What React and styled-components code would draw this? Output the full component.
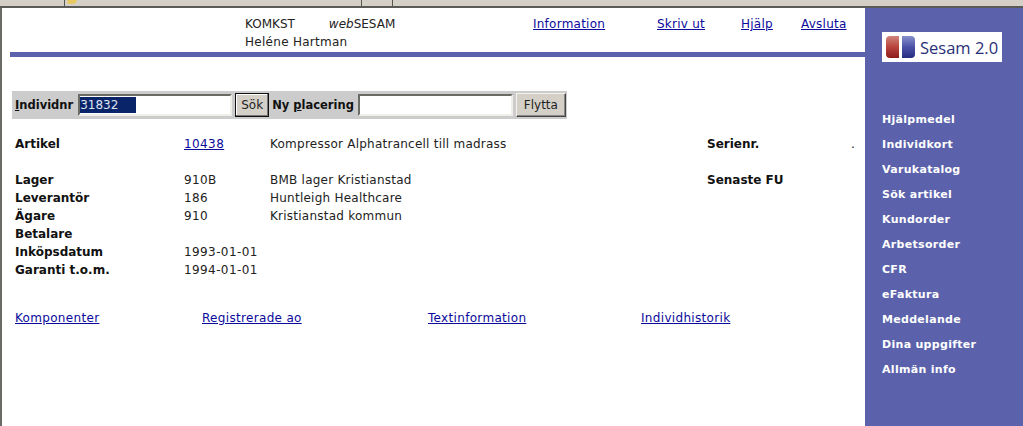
import React from 'react';
import styled, { createGlobalStyle } from 'styled-components';

const GlobalStyle = createGlobalStyle`
    html, body {
        margin: 0;
        padding: 0;
        height: 100%;
        overflow: hidden;
        background: #fff;
    }
    body {
        font-family: 'DejaVu Sans', Verdana, sans-serif;
        font-size: 12px;
        letter-spacing: 0.24px;
        color: #222;
    }
`;

const Page = styled.div`
    width: 1023px;
    height: 426px;
    display: flex;
    flex-direction: column;
    overflow: hidden;
`;

const BrowserBar = styled.div`
    height: 6px;
    flex: none;
    display: flex;
    background: #d4d0c8;
    border-bottom: 2px solid #5a5a56;
`;

const BarCell = styled.div`
    width: ${props => props.$width}px;
    flex: ${props => (props.$width ? 'none' : '1')};
    border-left: ${props => (props.$divider ? '1px solid #55554f' : 'none')};
    overflow: hidden;
`;

const Frame = styled.div`
    flex: 1;
    display: flex;
    min-height: 0;
    border-left: 2px solid #6a6a66;
`;

const Main = styled.main`
    flex: 1;
    min-width: 0;
    padding-left: 8px;
`;

const Header = styled.header`
    height: 44px;
    padding-top: 7px;
    box-sizing: border-box;
    display: grid;
    grid-template-columns: 235px 288px 124px 84px 60px 1fr;
    grid-auto-rows: 18px;
    line-height: 18px;
`;

const HeaderText = styled.div`
    grid-column: 2;
    white-space: nowrap;
    display: flex;
    gap: 34px;
    letter-spacing: ${props => (props.$caps ? 0 : 0.28)}px;
`;

const Rule = styled.div`
    height: 5px;
    background: #5b62ab;
`;

const A = styled.a`
    color: #0a0a9c;
    text-decoration: underline;
    white-space: nowrap;
`;

const SearchBar = styled.form`
    width: 555px;
    height: 28px;
    margin: 34px 0 0 2px;
    background: #cccccc;
    display: flex;
    align-items: center;
    box-sizing: border-box;
    padding-left: 3px;
    font-weight: bold;
    font-size: 11.5px;
    letter-spacing: 0;
    color: #111;
`;

const FieldLabel = styled.label`
    margin-right: ${props => props.$gap}px;
    white-space: nowrap;
`;

const Field = styled.div`
    width: ${props => props.$width}px;
    height: 22px;
    box-sizing: border-box;
    background: #fff;
    border: 2px solid;
    border-color: #6b6b66 #efeee9 #efeee9 #6b6b66;
    font-weight: normal;
    font-size: 12px;
    display: flex;
    align-items: center;
`;

const Selected = styled.span`
    width: 56px;
    height: 16px;
    line-height: 16px;
    background: #0a246a;
    color: #dfe3f0;
`;

const Button = styled.button`
    height: 24px;
    width: ${props => props.$width}px;
    margin: 0 ${props => props.$right}px 0 3px;
    padding: 0;
    box-sizing: border-box;
    background: #d4d0c8;
    color: #222;
    font: 12px 'DejaVu Sans', Verdana, sans-serif;
    border: 1px solid;
    border-color: ${props => (props.$focused ? '#111' : '#f2f1ec #444 #444 #f2f1ec')};
    box-shadow: ${props => (props.$focused ? 'inset -1px -1px 0 #777, inset 1px 1px 0 #fff' : 'inset -1px -1px 0 #888')};
`;

const Details = styled.section`
    margin: 16px 0 0 5px;
`;

const Row = styled.div`
    height: 18px;
    line-height: 18px;
    display: grid;
    grid-template-columns: 169px 86px 437px 144px 1fr;
    margin-bottom: ${props => props.$gap || 0}px;
    white-space: nowrap;

    > :nth-child(2) {
        letter-spacing: 0.4px;
    }
`;

const Label = styled.span`
    font-weight: bold;
    letter-spacing: 0;
    color: #111;
`;

const LinkRow = styled.nav`
    margin: 30px 0 0 5px;
    display: grid;
    grid-template-columns: 187px 226px 213px 1fr;
    line-height: 18px;
    letter-spacing: 0.32px;
`;

const Sidebar = styled.aside`
    width: 158px;
    flex: none;
    background: #5b62ab;
    padding: 24px 0 0 17px;
    box-sizing: border-box;
`;

const Logo = styled.div`
    width: 120px;
    height: 30px;
    background: #fff;
    display: flex;
    align-items: center;
    gap: 3px;
    padding-left: 3px;
    box-sizing: border-box;
    color: #2a2f78;
    font: 16.5px 'Open Sans', sans-serif;
    letter-spacing: 0;
    white-space: nowrap;
`;

const Menu = styled.ul`
    list-style: none;
    margin: 45px 0 0;
    padding: 0;
`;

const MenuItem = styled.li`
    height: 25px;
    line-height: 25px;
    color: #fff;
    font-size: 11px;
    font-weight: bold;
    letter-spacing: 0.3px;
`;

const menuItems = ['Hjälpmedel', 'Individkort', 'Varukatalog', 'Sök artikel', 'Kundorder', 'Arbetsorder', 'CFR', 'eFaktura', 'Meddelande', 'Dina uppgifter', 'Allmän info'];

function LogoMark() {
    return (
        <svg width="32" height="24" viewBox="0 0 32 24">
            <defs>
                <linearGradient id="redPill" x1="0" y1="0" x2="0" y2="1">
                    <stop offset="0" stopColor="#d0847c" />
                    <stop offset="0.5" stopColor="#b8443c" />
                    <stop offset="1" stopColor="#8c1c1c" />
                </linearGradient>
                <linearGradient id="bluePill" x1="0" y1="0" x2="0" y2="1">
                    <stop offset="0" stopColor="#8890cc" />
                    <stop offset="0.5" stopColor="#4a52a8" />
                    <stop offset="1" stopColor="#262c80" />
                </linearGradient>
            </defs>
            <path d="M5 1h9v22H5a4 4 0 0 1-4-4V5a4 4 0 0 1 4-4z" fill="url(#redPill)" />
            <path d="M17 1h9a4 4 0 0 1 4 4v14a4 4 0 0 1-4 4h-9z" fill="url(#bluePill)" />
        </svg>
    );
}

export default function App() {
    return (
        <Page>
            <GlobalStyle />
            <BrowserBar>
                <BarCell $width={64} />
                <BarCell $width={296} $divider>
                    <svg width="16" height="6" viewBox="0 0 16 6" style={{ display: 'block' }}>
                        <path d="M2 0h10l-1 3-4 1H3z" fill="#e8c860" />
                    </svg>
                </BarCell>
                <BarCell $width={30} $divider />
                <BarCell $divider />
            </BrowserBar>
            <Frame>
                <Main>
                    <Header>
                        <HeaderText $caps><span>KOMKST</span><span><i>web</i>SESAM</span></HeaderText>
                        <A href="#">Information</A>
                        <A href="#">Skriv ut</A>
                        <A href="#">Hjälp</A>
                        <A href="#">Avsluta</A>
                        <span />
                        <HeaderText>Heléne Hartman</HeaderText>
                    </Header>
                    <Rule />
                    <SearchBar>
                        <FieldLabel $gap={5}><u>I</u>ndividnr</FieldLabel>
                        <Field $width={154}><Selected>31832</Selected></Field>
                        <Button type="button" $width={34} $right={3} $focused>Sök</Button>
                        <FieldLabel $gap={4}>Ny <u>p</u>lacering</FieldLabel>
                        <Field $width={155} />
                        <Button type="button" $width={50} $right={0}>Flytta</Button>
                    </SearchBar>
                    <Details>
                        <Row $gap={18}>
                            <Label>Artikel</Label>
                            <A href="#">10438</A>
                            <span>Kompressor Alphatrancell till madrass</span>
                            <Label>Serienr.</Label>
                            <span>.</span>
                        </Row>
                        <Row>
                            <Label>Lager</Label>
                            <span>910B</span>
                            <span>BMB lager Kristianstad</span>
                            <Label>Senaste FU</Label>
                        </Row>
                        <Row>
                            <Label>Leverantör</Label>
                            <span>186</span>
                            <span>Huntleigh Healthcare</span>
                        </Row>
                        <Row>
                            <Label>Ägare</Label>
                            <span>910</span>
                            <span>Kristianstad kommun</span>
                        </Row>
                        <Row>
                            <Label>Betalare</Label>
                        </Row>
                        <Row>
                            <Label>Inköpsdatum</Label>
                            <span>1993-01-01</span>
                        </Row>
                        <Row>
                            <Label>Garanti t.o.m.</Label>
                            <span>1994-01-01</span>
                        </Row>
                    </Details>
                    <LinkRow>
                        <span><A href="#">Komponenter</A></span>
                        <span><A href="#">Registrerade ao</A></span>
                        <span><A href="#">Textinformation</A></span>
                        <span><A href="#">Individhistorik</A></span>
                    </LinkRow>
                </Main>
                <Sidebar>
                    <Logo><LogoMark />Sesam 2.0</Logo>
                    <Menu>
                        {menuItems.map(item => <MenuItem key={item}>{item}</MenuItem>)}
                    </Menu>
                </Sidebar>
            </Frame>
        </Page>
    );
}
